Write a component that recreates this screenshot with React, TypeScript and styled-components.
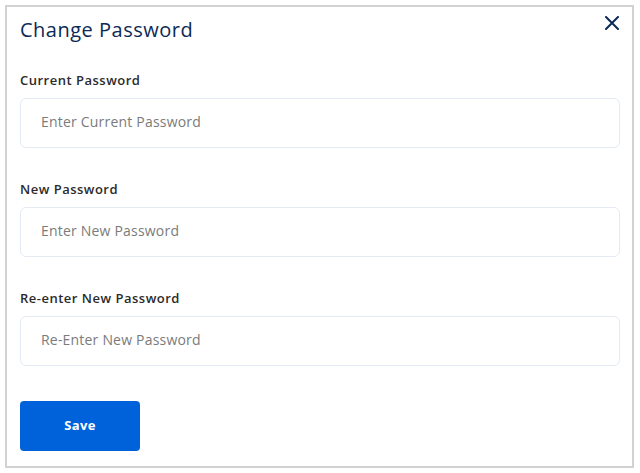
import React from 'react';
import styled, { createGlobalStyle } from 'styled-components';

const GlobalStyle = createGlobalStyle`
  html, body {
    margin: 0;
    padding: 0;
    background: #ffffff;
    font-family: 'Open Sans', 'Liberation Sans', sans-serif;
  }
`;

const Modal = styled.section`
  box-sizing: border-box;
  width: 629px;
  height: 463px;
  margin: 5px;
  padding: 9px 12px 0 13px;
  border: 2px solid #d2d2d2;
  background: #ffffff;
  display: flex;
  flex-direction: column;
`;

const Header = styled.header`
  display: flex;
  justify-content: space-between;
  align-items: flex-start;
`;

const Title = styled.h2`
  margin: 0;
  font-size: 20px;
  line-height: 28px;
  font-weight: 400;
  letter-spacing: 0.5px;
  color: #0b2a55;
`;

const CloseButton = styled.button`
  display: flex;
  padding: 0;
  margin: 0 1px 0 0;
  border: none;
  background: none;
  cursor: pointer;
  color: #0b2a55;
`;

const Form = styled.form`
  display: flex;
  flex-direction: column;
  margin-top: 27px;
`;

const Field = styled.div`
  display: flex;
  flex-direction: column;
  gap: 9px;
  margin-bottom: 32px;

  &:last-of-type {
    margin-bottom: 35px;
  }
`;

const Label = styled.label`
  font-size: 13px;
  line-height: 18px;
  font-weight: 600;
  letter-spacing: 0.5px;
  color: #2b2b2b;
`;

const Input = styled.input`
  box-sizing: border-box;
  width: 100%;
  height: 50px;
  padding: 0 20px 3px;
  border: 1px solid #e4eaf3;
  border-radius: 6px;
  font-family: inherit;
  font-size: 14px;
  letter-spacing: 0.2px;
  color: #333;
  outline: none;

  &::placeholder {
    color: #7b7b7b;
  }
`;

const SaveButton = styled.button`
  width: 120px;
  height: 50px;
  padding: 0 0 2px;
  border: none;
  border-radius: 4px;
  background: #0062db;
  color: #ffffff;
  font-family: inherit;
  font-size: 13px;
  font-weight: 700;
  letter-spacing: 0.3px;
  cursor: pointer;
`;

const fields = [
  { id: 'current', label: 'Current Password', placeholder: 'Enter Current Password' },
  { id: 'new', label: 'New Password', placeholder: 'Enter New Password' },
  { id: 'confirm', label: 'Re-enter New Password', placeholder: 'Re-Enter New Password' },
];

const App: React.FC = () => {
  return (
    <>
      <GlobalStyle />
      <Modal>
        <Header>
          <Title>Change Password</Title>
          <CloseButton type='button' aria-label='Close'>
            <svg width='14' height='14' viewBox='0 0 14 14'>
              <path
                d='M1 1 L13 13 M13 1 L1 13'
                stroke='currentColor'
                strokeWidth='2'
                strokeLinecap='round'
              />
            </svg>
          </CloseButton>
        </Header>
        <Form onSubmit={(e) => e.preventDefault()}>
          {fields.map((field) => (
            <Field key={field.id}>
              <Label htmlFor={field.id}>{field.label}</Label>
              <Input id={field.id} type='password' placeholder={field.placeholder} />
            </Field>
          ))}
          <SaveButton type='submit'>Save</SaveButton>
        </Form>
      </Modal>
    </>
  );
};

export default App;
